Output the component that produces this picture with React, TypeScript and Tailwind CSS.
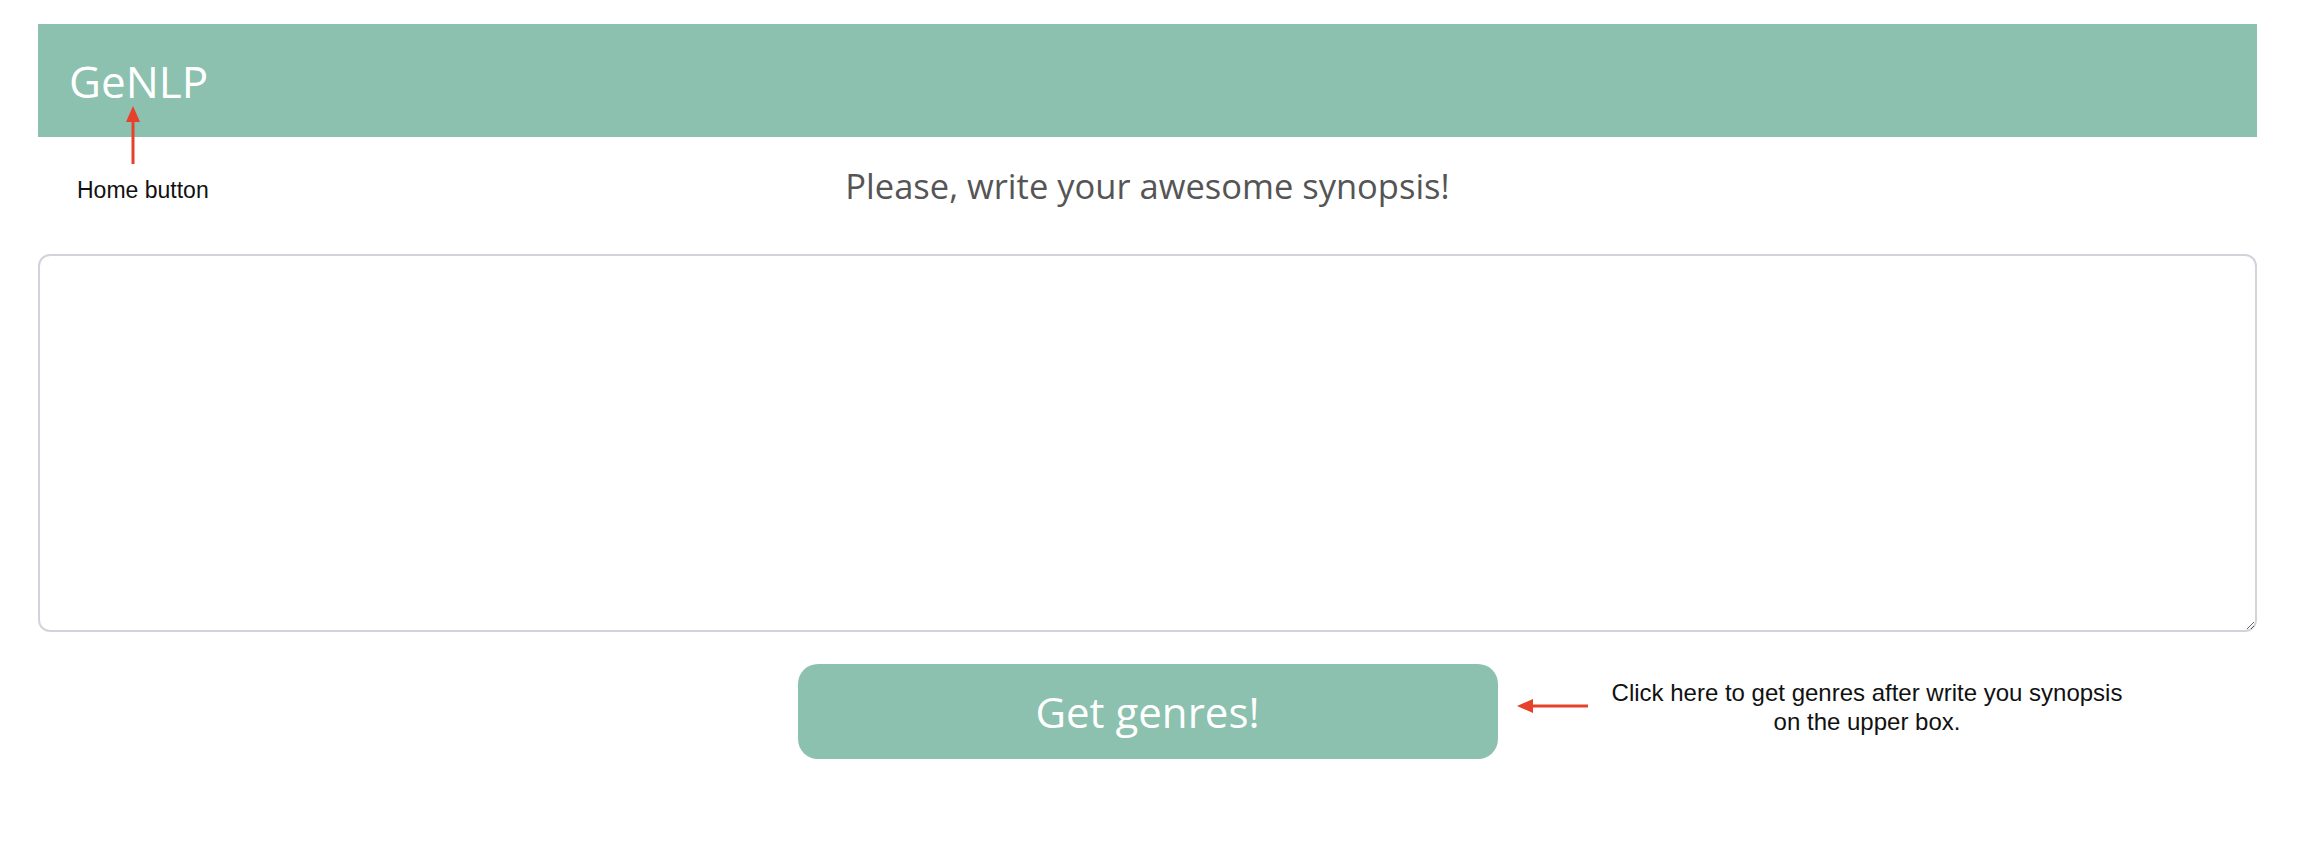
import { useState } from 'react'

const font = { fontFamily: '"Open Sans", "Noto Sans", sans-serif' }

export default function App() {
  const [synopsis, setSynopsis] = useState('')

  return (
    <div className="relative min-h-[852px] w-full bg-white" style={font}>
      <div className="ml-[38px] w-[2219px] pt-[24px]">
        {/* Navbar */}
        <nav className="flex h-[113px] items-center bg-[#8bc1ae] pl-[31px]">
          <a href="#" className="text-[44px] leading-none text-white">
            GeNLP
          </a>
        </nav>

        <h2 className="mt-[32px] h-[34px] text-center text-[34.5px] font-medium leading-none text-[#555555]">
          Please, write your awesome synopsis!
        </h2>

        <textarea
          value={synopsis}
          onChange={(e) => setSynopsis(e.target.value)}
          className="mt-[51px] block h-[378px] w-full rounded-[12px] border-2 border-[#d1d5db] bg-white p-4 text-lg outline-none"
        />

        <div className="mt-[32px] flex justify-center">
          <button className="h-[95px] w-[700px] rounded-[20px] bg-[#8bc1ae] text-[42px] font-normal text-white">
            Get genres!
          </button>
        </div>
      </div>

      {/* Annotations */}
      <svg className="absolute left-[124px] top-[104px]" width="18" height="62" viewBox="0 0 18 62">
        <line x1="9" y1="14" x2="9" y2="60" stroke="#e5412b" strokeWidth="3" />
        <polygon points="9,2 2,18 16,18" fill="#e5412b" />
      </svg>
      <p
        className="absolute left-[77px] top-[179px] text-[23px] leading-none text-[#111]"
        style={{ fontFamily: '"Liberation Sans", Arial, sans-serif' }}
      >
        Home button
      </p>

      <svg className="absolute left-[1514px] top-[697px]" width="76" height="18" viewBox="0 0 76 18">
        <line x1="14" y1="9" x2="74" y2="9" stroke="#e5412b" strokeWidth="3" />
        <polygon points="3,9 19,2 19,16" fill="#e5412b" />
      </svg>
      <p
        className="absolute left-[1607px] top-[678px] w-[520px] text-center text-[24px] leading-[29px] text-[#111]"
        style={{ fontFamily: '"Liberation Sans", Arial, sans-serif' }}
      >
        Click here to get genres after write you synopsis
        <br />
        on the upper box.
      </p>
    </div>
  )
}
